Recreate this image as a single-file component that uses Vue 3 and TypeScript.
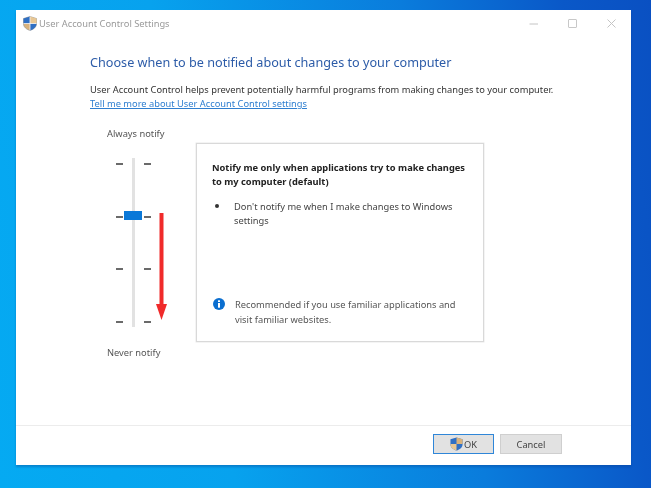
<script setup lang="ts">
const ticks = [0, 1, 2, 3]
</script>

<template>
  <div class="desktop">
    <div class="window">
      <div class="titlebar">
        <svg class="shield" viewBox="0 0 14 15" width="14" height="15">
          <path d="M7 .5 13.500 2.500V8c0 3-3 5.500-6.500 6.500C3.500 13.500.5 11 .5 8V2.500Z" fill="#d9b27c" stroke="#7a8490" stroke-width=".5" />
          <path d="M7 .5V7.500H.5V2.500Z" fill="#2f6fc4" />
          <path d="M7 7.500H13.500C13.400 11 10.500 13.500 7 14.500Z" fill="#2f6fc4" />
          <path d="M7 .5 13.500 2.500V7.500H7Z" fill="#e8c794" />
          <path d="M7 .5V14.500" stroke="#f4f4f4" stroke-width=".8" />
          <path d="M.5 7.500H13.500" stroke="#f4f4f4" stroke-width=".8" />
        </svg>
        <span class="title">User Account Control Settings</span>
        <div class="controls">
          <svg viewBox="0 0 9 9" width="9" height="9"><path d="M.5 5H9" stroke="#c4c4c4" /></svg>
          <svg viewBox="0 0 9 9" width="9" height="9"><rect x=".5" y=".5" width="8" height="8" rx=".5" fill="none" stroke="#c8c8c8" /></svg>
          <svg viewBox="0 0 9 9" width="9" height="9"><path d="M.5.5 8.500 8.500M8.500.5.5 8.500" stroke="#c4c4c4" /></svg>
        </div>
      </div>

      <div class="content">
        <h1>Choose when to be notified about changes to your computer</h1>
        <p class="intro">User Account Control helps prevent potentially harmful programs from making changes to your computer.</p>
        <a class="more">Tell me more about User Account Control settings</a>

        <div class="panel">
          <div class="level">
            <span class="level-label top">Always notify</span>
            <div class="slider">
              <div class="tick-col">
                <i v-for="t in ticks" :key="t" class="tick" />
              </div>
              <div class="track" />
              <div class="tick-col">
                <i v-for="t in ticks" :key="t" class="tick" />
              </div>
              <div class="thumb" />
              <svg class="arrow" viewBox="0 0 11 107" width="11" height="107">
                <path d="M3.500 0H7.500V91H11L5.500 107 0 91H3.500Z" fill="#f02a2a" />
              </svg>
            </div>
            <span class="level-label bottom">Never notify</span>
          </div>

          <div class="box">
            <div class="box-head">Notify me only when applications try to make changes to my computer (default)</div>
            <div class="bullet-row">
              <i class="dot" />
              <span>Don't notify me when I make changes to Windows settings</span>
            </div>
            <div class="info-row">
              <svg viewBox="0 0 12 12" width="12" height="12">
                <circle cx="6" cy="6" r="6" fill="#0b6fd0" />
                <rect x="5" y="2.300" width="2" height="1.700" fill="#fff" />
                <rect x="5" y="5" width="2" height="4.700" fill="#fff" />
              </svg>
              <span>Recommended if you use familiar applications and visit familiar websites.</span>
            </div>
          </div>
        </div>
      </div>

      <div class="footer">
        <button class="btn primary">
          <svg viewBox="0 0 14 15" width="13" height="14">
            <path d="M7 .5 13.500 2.500V8c0 3-3 5.500-6.500 6.500C3.500 13.500.5 11 .5 8V2.500Z" fill="#2f6fc4" />
            <path d="M7 .5 13.500 2.500V7.500H7Z" fill="#d9b27c" />
            <path d="M.5 7.500H7V14.500C3.500 13.500.5 11 .5 8Z" fill="#e8c794" />
          </svg>
          OK
        </button>
        <button class="btn cancel">Cancel</button>
      </div>
    </div>
  </div>
</template>

<style>
html, body {
  margin: 0;
  padding: 0;
  overflow: hidden;
}
</style>

<style scoped>
.desktop {
  width: 651px;
  height: 488px;
  box-sizing: border-box;
  padding: 10px 20px 23px 16px;
  background: linear-gradient(80deg, #05aaf2 0%, #07a2ee 32%, #0a7cdc 66%, #0a58c8 88%, #0a50c2 100%);
  font-family: "Noto Sans", "Liberation Sans", sans-serif;
  color: #3a3a3a;
}

.window {
  height: 455px;
  background: #fff;
  display: flex;
  flex-direction: column;
  box-shadow: 0 2px 2px rgba(10, 60, 140, 0.35);
  filter: blur(0.35px);
}

.titlebar {
  height: 26px;
  flex: none;
  display: flex;
  align-items: center;
  padding: 0 15px 0 7px;
}

.shield {
  margin-right: 2px;
}

.title {
  font-size: 9.300px;
  color: #9a9a9a;
}

.controls {
  margin-left: auto;
  display: flex;
  align-items: center;
  gap: 30px;
}

.content {
  flex: 1;
  padding: 17px 0 0 74px;
}

h1 {
  margin: 0;
  font-size: 12.650px;
  line-height: 18px;
  font-weight: 400;
  color: #2d5ca8;
}

.intro {
  margin: 12px 0 0;
  font-size: 9.300px;
  line-height: 14px;
  color: #333;
  white-space: nowrap;
}

.more {
  display: block;
  font-size: 9.300px;
  line-height: 13px;
  color: #2f7fd0;
  text-decoration: underline;
}

.panel {
  display: flex;
  margin: 17px 0 0 17px;
}

.level {
  width: 89px;
  flex: none;
  display: flex;
  flex-direction: column;
}

.level-label {
  font-size: 9.300px;
  line-height: 14px;
  color: #555;
}

.slider {
  position: relative;
  width: 35px;
  height: 169px;
  margin: 17px 0 0 9px;
  display: flex;
  justify-content: space-between;
}

.bottom {
  margin-top: 19px;
}

.tick-col {
  width: 7px;
  height: 169px;
  padding: 5px 0 4px;
  box-sizing: border-box;
  display: flex;
  flex-direction: column;
  justify-content: space-between;
  align-items: center;
}

.tick {
  width: 7px;
  height: 2px;
  background: #6a6a6a;
}

.track {
  width: 3px;
  height: 169px;
  background: #e2e2e2;
}

.thumb {
  position: absolute;
  left: 8px;
  top: 53px;
  width: 18px;
  height: 9px;
  background: #0a78d8;
}

.arrow {
  position: absolute;
  left: 40px;
  top: 55px;
}

.box {
  width: 288px;
  height: 199px;
  margin-top: 16px;
  box-sizing: border-box;
  padding: 17px 10px 0 15px;
  border: 1px solid #d9d9d9;
  box-shadow: 0 0 0 0.5px #e8e8e8;
  display: flex;
  flex-direction: column;
}

.box-head {
  font-size: 9.300px;
  line-height: 14px;
  font-weight: 700;
  color: #222;
}

.bullet-row {
  display: flex;
  margin-top: 11px;
  padding-left: 3px;
  padding-right: 10px;
  font-size: 9.300px;
  line-height: 14px;
  color: #444;
}

.dot {
  width: 4px;
  height: 4px;
  border-radius: 50%;
  background: #333;
  margin: 4px 15px 0 0;
  flex: none;
}

.info-row {
  display: flex;
  margin-top: auto;
  margin-bottom: 14px;
  padding-left: 1px;
  padding-right: 14px;
  font-size: 9.300px;
  line-height: 15px;
  color: #555;
  gap: 10px;
}

.info-row svg {
  flex: none;
  margin-top: 1px;
}

.footer {
  height: 40px;
  flex: none;
  border-top: 1px solid #ececec;
  box-sizing: border-box;
  display: flex;
  justify-content: flex-end;
  align-items: center;
  gap: 6px;
  padding: 0 69px 3px 0;
}

.btn {
  width: 61px;
  height: 20px;
  box-sizing: border-box;
  border: 1px solid #cfcfcf;
  background: #e2e2e2;
  font-family: inherit;
  font-size: 9.300px;
  color: #444;
  padding: 0;
  display: flex;
  align-items: center;
  justify-content: center;
  gap: 1px;
}

.cancel {
  width: 62px;
}

.primary {
  border: 1px solid #2f86d8;
}
</style>
